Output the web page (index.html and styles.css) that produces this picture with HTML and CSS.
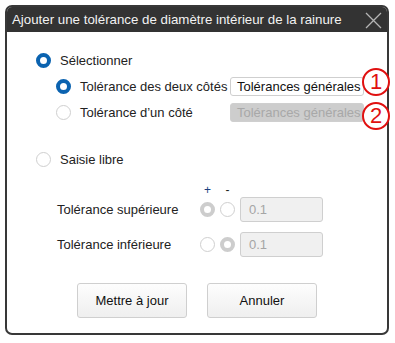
FILE: index.html
```html
<!DOCTYPE html>
<html lang="fr">
<head>
    <meta charset="UTF-8">
    <title>Tolérance de diamètre intérieur</title>
    <link rel="stylesheet" href="styles.css">
</head>
<body>
    <div class="dialog">
        <header class="titre">
            <span>Ajouter une tolérance de diamètre intérieur de la rainure</span>
            <svg class="fermer" width="17" height="17" viewBox="0 0 17 17">
                <path d="M1 1 L16 16 M16 1 L1 16" stroke="#b5b5b5" stroke-width="1.3" fill="none"/>
            </svg>
        </header>
        <section class="contenu">
            <div class="ligne l1">
                <span class="radio actif"></span>
                <span>Sélectionner</span>
            </div>
            <div class="ligne l2 sous">
                <span class="radio actif"></span>
                <span class="lib">Tolérance des deux côtés</span>
                <span class="liste">Tolérances générales</span>
            </div>
            <div class="ligne l3 sous">
                <span class="radio"></span>
                <span class="lib">Tolérance d’un côté</span>
                <span class="liste off">Tolérances générales</span>
            </div>
            <div class="ligne l4">
                <span class="radio"></span>
                <span>Saisie libre</span>
            </div>
            <div class="signes">
                <span>+</span>
                <span>-</span>
            </div>
            <div class="tol">
                <span class="nom">Tolérance supérieure</span>
                <span class="radio gris"></span>
                <span class="radio"></span>
                <span class="valeur">0.1</span>
            </div>
            <div class="tol t2">
                <span class="nom">Tolérance inférieure</span>
                <span class="radio"></span>
                <span class="radio gris"></span>
                <span class="valeur">0.1</span>
            </div>
            <div class="boutons">
                <button>Mettre à jour</button>
                <button>Annuler</button>
            </div>
        </section>
        <div class="repere r1">1</div>
        <div class="repere r2">2</div>
    </div>
</body>
</html>
```
FILE: styles.css
```css
body {
    margin: 0;
    background: #fff;
    font-family: "Liberation Sans", Arial, sans-serif;
    font-size: 13px;
    color: #222;
}

.dialog {
    position: relative;
    margin: 5px 0 0 5px;
    width: 380px;
    height: 326px;
    border: 2px solid #383838;
    border-radius: 7px;
}

.titre {
    height: 25px;
    background: #333;
    color: #f2f2f2;
    font-size: 13.3px;
    display: flex;
    align-items: center;
    justify-content: space-between;
    padding: 0 5px 0 5px;
    border-radius: 5px 5px 0 0;
}

.fermer {
    margin-top: 1px;
}

.contenu {
    padding: 18px 0 0 29px;
}

.ligne {
    height: 20px;
    display: flex;
    align-items: center;
}

.l2, .l3 {
    margin-top: 6px;
}

.l4 {
    margin-top: 27px;
}

.sous {
    padding-left: 20px;
}

.radio {
    box-sizing: border-box;
    width: 15px;
    height: 15px;
    border-radius: 50%;
    border: 1px solid #cfcfcf;
    background: #fff;
    flex: none;
}

.radio.actif {
    border: 4px solid #0b63b0;
}

.radio.gris {
    border: 4px solid #cdcdcd;
}

.ligne .radio {
    margin-right: 9px;
}

.lib {
    width: 150px;
}

.liste {
    box-sizing: border-box;
    width: 134px;
    height: 19px;
    line-height: 17px;
    padding-left: 6px;
    border: 1px solid #cfcfcf;
    border-radius: 3px;
    background: #fff;
    color: #111;
    white-space: nowrap;
    overflow: hidden;
}

.liste.off {
    background: #cdcdcd;
    color: #a8a8a8;
}

.signes {
    margin-top: 14px;
    padding-left: 164px;
    height: 14px;
    display: flex;
    gap: 5px;
    font-size: 12px;
    color: #222;
}

.signes span {
    width: 15px;
    text-align: center;
}

.signes span:first-child {
    color: #1a3e80;
}

.tol {
    height: 25px;
    display: flex;
    align-items: center;
    gap: 5px;
    padding-left: 21px;
}

.t2 {
    margin-top: 10px;
}

.nom {
    width: 138px;
}

.valeur {
    box-sizing: border-box;
    width: 83px;
    height: 25px;
    line-height: 23px;
    padding-left: 8px;
    border: 1px solid #cfcfcf;
    border-radius: 3px;
    background: #f0f0f0;
    color: #a5a5a5;
}

.boutons {
    margin: 26px 0 0 -29px;
    display: flex;
    justify-content: center;
    gap: 20px;
}

.boutons button {
    width: 110px;
    height: 35px;
    border: 1px solid #cfcfcf;
    border-radius: 3px;
    background: linear-gradient(#fdfdfd, #efefef);
    font-family: "Liberation Sans", Arial, sans-serif;
    font-size: 13px;
    color: #111;
}

.repere {
    position: absolute;
    left: 355px;
    box-sizing: border-box;
    width: 28px;
    height: 28px;
    border: 2px solid #e01010;
    border-radius: 50%;
    background: #fff;
    color: #e01010;
    font-size: 22px;
    line-height: 24px;
    text-align: center;
}

.r1 {
    top: 61px;
}

.r2 {
    top: 95px;
}
```
